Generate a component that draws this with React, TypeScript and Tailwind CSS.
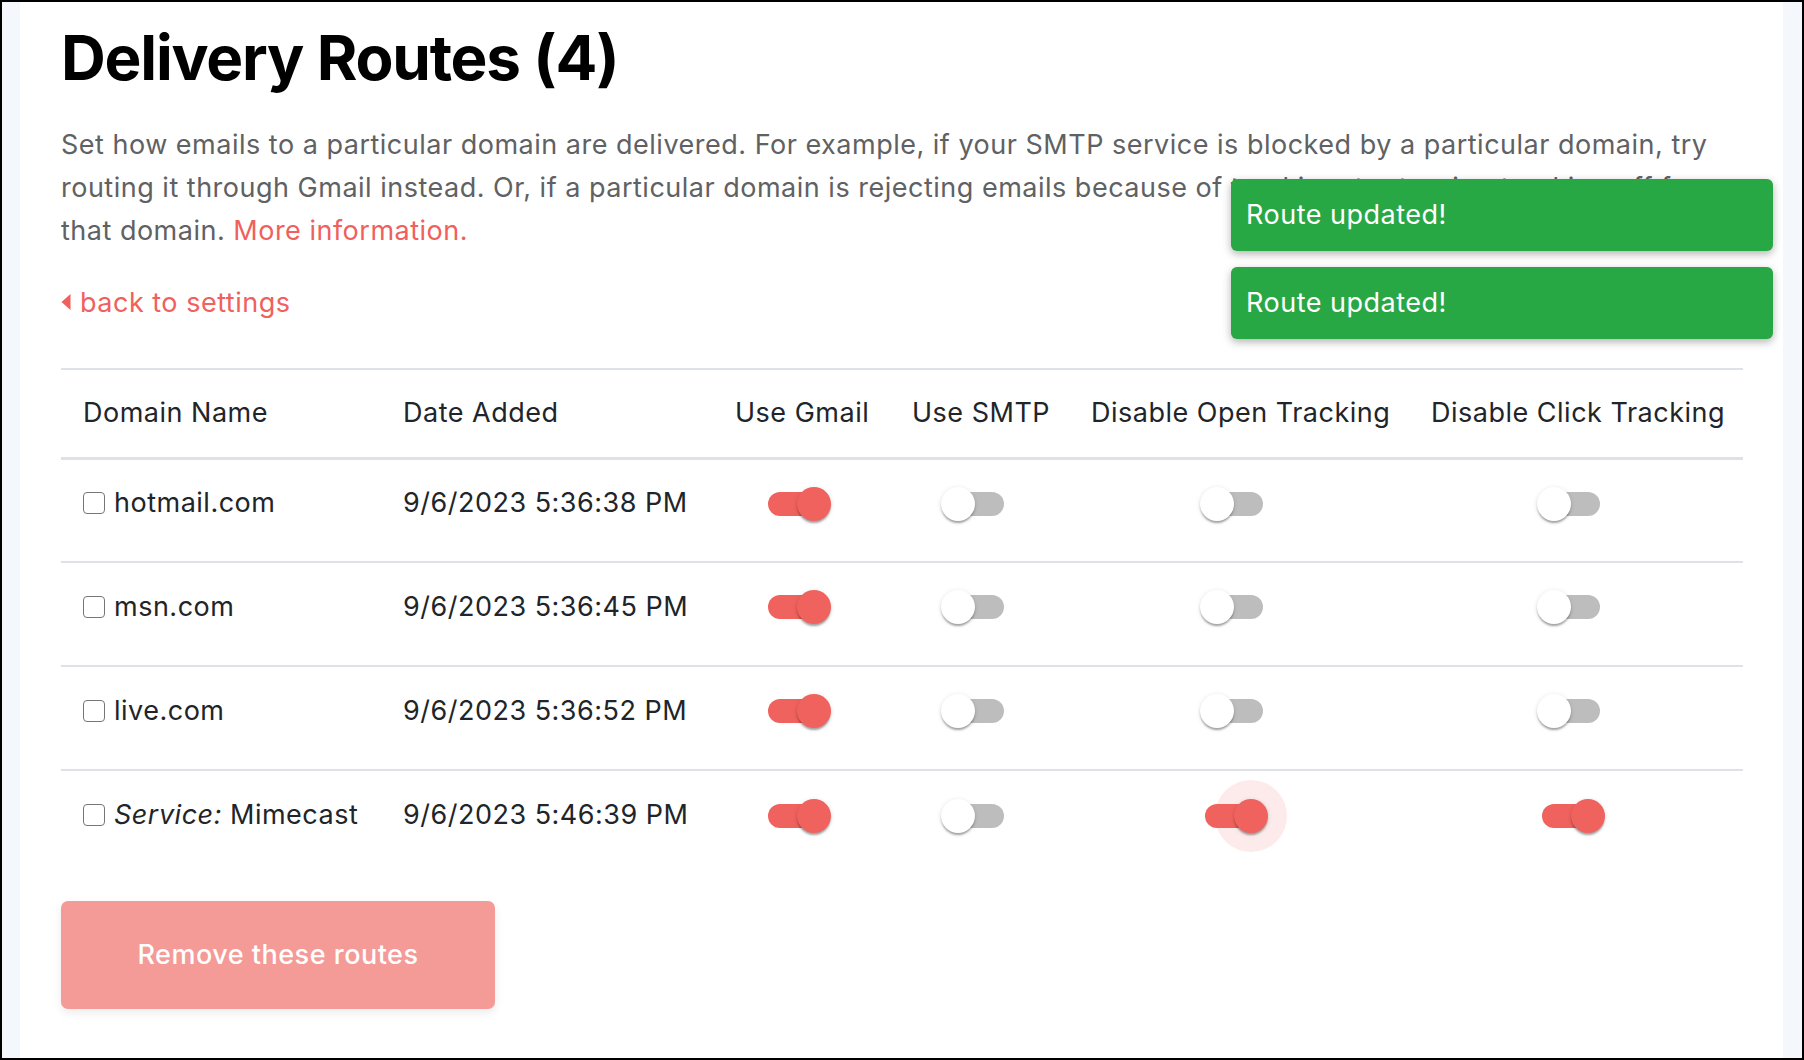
import React from "react";

type Route = {
  name: React.ReactNode;
  added: string;
  gmail: boolean;
  smtp: boolean;
  openOff: boolean;
  clickOff: boolean;
  focus?: boolean;
};

const routes: Route[] = [
  { name: "hotmail.com", added: "9/6/2023 5:36:38 PM", gmail: true, smtp: false, openOff: false, clickOff: false },
  { name: "msn.com", added: "9/6/2023 5:36:45 PM", gmail: true, smtp: false, openOff: false, clickOff: false },
  { name: "live.com", added: "9/6/2023 5:36:52 PM", gmail: true, smtp: false, openOff: false, clickOff: false },
  {
    name: (
      <>
        <i>Service:</i> Mimecast
      </>
    ),
    added: "9/6/2023 5:46:39 PM",
    gmail: true,
    smtp: false,
    openOff: true,
    clickOff: true,
    focus: true,
  },
];

const Toggle = ({ on, focus }: { on: boolean; focus?: boolean }) => {
  return (
    <span className="relative inline-block w-[68px] h-[34px] align-middle">
      {focus && (
        <span className="absolute left-[15px] top-[-19px] w-[72px] h-[72px] rounded-full bg-[rgba(240,96,93,0.13)]" />
      )}
      <span
        className={
          "absolute left-[5px] top-[5px] w-[58px] h-[24px] rounded-full " +
          (on ? "bg-[#f0625e]" : "bg-[#bdbdbd]")
        }
      />
      <span
        className={
          "absolute top-0 w-[34px] h-[34px] rounded-full shadow-[0_3px_2px_-1px_rgba(0,0,0,0.2),0_2px_2px_0_rgba(0,0,0,0.14),0_1px_5px_0_rgba(0,0,0,0.12)] " +
          (on ? "left-[34px] bg-[#f0625e]" : "left-0 bg-white")
        }
      />
    </span>
  );
};

const Checkbox = () => (
  <span className="inline-block w-[22px] h-[22px] border-[1.5px] border-[#767676] rounded-[4px] bg-white mr-[9px] align-[-2px]" />
);

export default function App() {
  return (
    <div
      className="relative w-[1804px] h-[1060px] border-2 border-black bg-[#f4f7fb] flex overflow-hidden tracking-[0.5px]"
      style={{ fontFamily: "Inter, 'Noto Sans', sans-serif" }}
    >
      <div className="w-[18px] shrink-0" />
      <div className="flex-1 bg-white pl-[41px] pr-[38px] pt-[19px]">
        <h1 className="text-[62px] leading-[74px] font-bold text-black tracking-[-1.2px]">Delivery Routes (4)</h1>

        <p className="mt-[28px] text-[27px] leading-[43px] text-[#606163]">
          Set how emails to a particular domain are delivered. For example, if your SMTP service is blocked by a particular domain, try
          <br />
          routing it through Gmail instead. Or, if a particular domain is rejecting emails because of tracking, try turning tracking off for
          <br />
          that domain. <a className="text-[#f0605d]">More information.</a>
        </p>

        <a className="mt-[29px] flex items-center gap-[9px] text-[27px] leading-[43px] text-[#f0605d]">
          <svg width="10" height="18" viewBox="0 0 10 18" className="mt-[-2px]">
            <path d="M9.5 1 L0.5 9 L9.5 17 Z" fill="#f0605d" />
          </svg>
          back to settings
        </a>

        <table className="mt-[44px] w-[1682px] table-fixed border-collapse text-[27px] text-[#212529]">
          <colgroup>
            <col className="w-[320px]" />
            <col className="w-[332px]" />
            <col className="w-[177px]" />
            <col className="w-[179px]" />
            <col className="w-[340px]" />
            <col className="w-[334px]" />
          </colgroup>
          <thead>
            <tr className="h-[89px] border-t-2 border-b-[3px] border-[#dee2e6]">
              <th className="px-[22px] text-left font-normal whitespace-nowrap">Domain Name</th>
              <th className="px-[22px] text-left font-normal whitespace-nowrap">Date Added</th>
              <th className="px-[22px] text-left font-normal whitespace-nowrap">Use Gmail</th>
              <th className="px-[22px] text-left font-normal whitespace-nowrap">Use SMTP</th>
              <th className="px-[22px] text-left font-normal whitespace-nowrap">Disable Open Tracking</th>
              <th className="px-[22px] text-left font-normal whitespace-nowrap">Disable Click Tracking</th>
            </tr>
          </thead>
          <tbody>
            {routes.map((r, i) => (
              <tr key={i} className={"h-[104px] " + (i > 0 ? "border-t-2 border-[#dee2e6]" : "")}>
                <td className="px-[22px] pb-[14px] whitespace-nowrap">
                  <Checkbox />
                  {r.name}
                </td>
                <td className="px-[22px] pb-[14px] whitespace-nowrap">{r.added}</td>
                <td className="px-[22px] pb-[16px] text-center pr-[32px]">
                  <Toggle on={r.gmail} />
                </td>
                <td className="px-[22px] pb-[16px] text-center pr-[32px]">
                  <Toggle on={r.smtp} />
                </td>
                <td className="px-[22px] pb-[16px] text-center pr-[32px]">
                  <Toggle on={r.openOff} focus={r.focus} />
                </td>
                <td className="px-[22px] pb-[16px] text-center pr-[32px]">
                  <Toggle on={r.clickOff} />
                </td>
              </tr>
            ))}
          </tbody>
        </table>

        <button className="mt-[27px] w-[434px] h-[108px] rounded-[7px] bg-[#f49a97] text-white text-[27px] font-medium shadow-[0_4px_10px_rgba(0,0,0,0.08)]">
          Remove these routes
        </button>
      </div>
      <div className="w-[19px] shrink-0" />

      {/* toasts */}
      <div className="absolute top-[177px] right-[29px] flex flex-col gap-[16px]">
        <div className="w-[542px] h-[72px] rounded-[6px] bg-[#28a745] text-white text-[27px] flex items-center pl-[15px] shadow-[0_3px_8px_rgba(0,0,0,0.3)]">
          Route updated!
        </div>
        <div className="w-[542px] h-[72px] rounded-[6px] bg-[#28a745] text-white text-[27px] flex items-center pl-[15px] shadow-[0_3px_8px_rgba(0,0,0,0.3)]">
          Route updated!
        </div>
      </div>
    </div>
  );
}
